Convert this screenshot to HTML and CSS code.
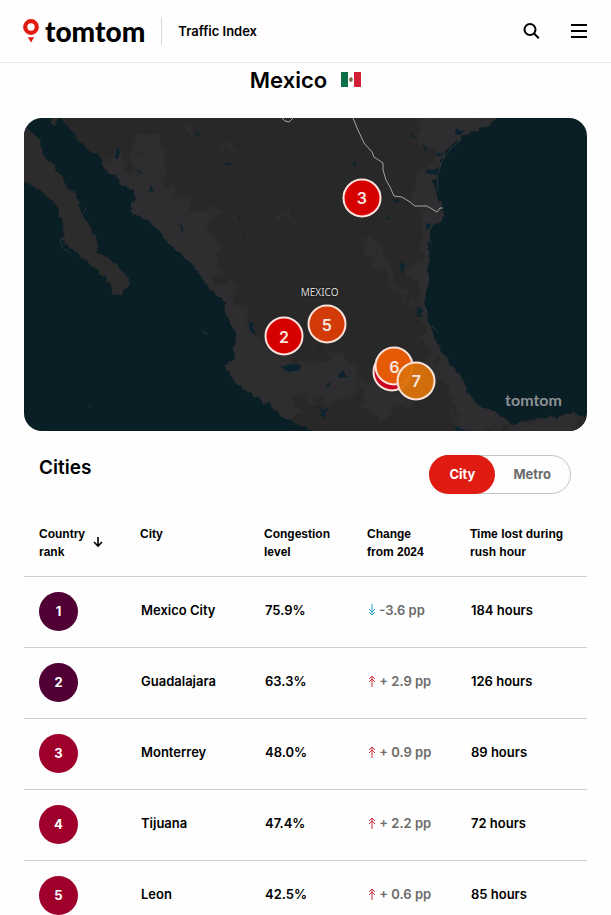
FILE: index.html
```html
<!DOCTYPE html>
<html lang="en">

<head>
  <meta charset="UTF-8">
  <meta name="viewport" content="width=device-width, initial-scale=1.0">
  <title>Mexico traffic | TomTom Traffic Index</title>
  <link rel="stylesheet" href="styles.css">
</head>

<body>
  <header class="header">
    <a class="logo" href="#">
      <svg class="logo-pin" viewBox="0 0 16 24" aria-hidden="true">
        <circle cx="8" cy="8" r="5.8" fill="none" stroke="#df1b12" stroke-width="4.2" />
        <path d="M4.8 18.2h6.4L8 23.6z" fill="#df1b12" />
      </svg>
      <span class="logo-text">tomtom</span>
    </a>
    <a class="product" href="#">Traffic Index</a>
    <button class="icon-button" type="button" aria-label="Search">
      <svg width="18" height="18" viewBox="0 0 18 18" fill="none" stroke="#000" stroke-width="2">
        <circle cx="8" cy="7.500" r="5.500" />
        <path d="M12 11.500l4.800 4.800" />
      </svg>
    </button>
    <button class="icon-button" type="button" aria-label="Menu">
      <svg width="18" height="18" viewBox="0 0 18 18" fill="none" stroke="#000" stroke-width="2">
        <path d="M1 3h16M1 9h16M1 15h16" />
      </svg>
    </button>
  </header>

  <main class="page">
    <div class="title">
      <h1>Mexico</h1>
      <svg class="flag" viewBox="0 0 20 15" role="img" aria-label="Flag of Mexico">
        <path d="M0 0h7v15H0z" fill="#0b7048" />
        <path d="M7 0h6v15H7z" fill="#fff" />
        <path d="M13 0h7v15h-7z" fill="#d31f34" />
        <path d="M8.2 6.500l2-1.500 1.600 1.500-.4 2.700-1.900.8-1.300-1.500z" fill="#7b6a41" />
      </svg>
    </div>

    <section class="map" aria-label="Map of Mexico">
      <svg class="map-canvas" viewBox="0 0 563 313" preserveAspectRatio="xMidYMid slice" aria-hidden="true">
        <defs>
          <filter id="rough" x="-5%" y="-5%" width="110%" height="110%" color-interpolation-filters="sRGB">
            <feTurbulence type="fractalNoise" baseFrequency="0.16" numOctaves="3" seed="4" />
            <feDisplacementMap in="SourceGraphic" scale="6" xChannelSelector="R" yChannelSelector="G" />
          </filter>
          <filter id="patchy" x="-10%" y="-10%" width="120%" height="120%" color-interpolation-filters="sRGB">
            <feTurbulence type="fractalNoise" baseFrequency="0.06" numOctaves="4" seed="9" />
            <feDisplacementMap in="SourceGraphic" scale="34" xChannelSelector="R" yChannelSelector="G" />
            <feGaussianBlur stdDeviation="1" />
          </filter>
          <path id="mainland" d="M36 -6V0L46 12 56 25 66 33 76 37 78 47 84 55 94 60 98 67 108 72 113 80 107 89 109 97 123 102 133 109 139 117 144 125 156 135 166 144 178 160 186 172 193 177 201 185 203 199 211 212 213 224 208 232 212 239 201 247 211 264 228 277 244 285 258 299 274 307 289 313V322H572V300L563 300 549 294 533 299 509 301 488 307 473 294 456 290 443 275 436 257 418 235 404 205 401 182 404 160 405 132 406 109 418 102 419 89 414 80 409 64 416 42 426 29 439 17 454 12 466 7 471 0V-6z" />
          <clipPath id="land"><use href="#mainland" /></clipPath>
        </defs>
        <rect width="563" height="313" fill="#0a1e26" />
        <g filter="url(#rough)">
          <use href="#mainland" fill="#282828" />
          <path fill="#2d2c2d" d="M-6 9H0L6 12 13 19 17 25 20 39 28 45 38 59 43 70 51 75 54 85 59 99 64 107 71 117 74 125 73 134 84 140 94 147 100 155 105 160 104 169 96 177 89 176 87 167 71 150 58 139 46 130 39 122 38 105 34 89 24 79 13 70 0 65H-6zM26 -4H33L31 9 27 7z" />
          <g clip-path="url(#land)">
            <g fill="#2e2e30" filter="url(#patchy)">
              <path d="M75 30L98 42 111 60 116 14 140 18 142 60 150 76 190 90 184 120 196 160 213 182 228 215 270 240 318 232 340 262 310 286 270 282 268 313 190 300 150 180 90 90z" />
              <path d="M395 -5H480L470 20 430 35 424 115 412 118 412 170 422 220 460 280 500 310 440 315 420 270 398 215 388 160 398 110 390 70 408 40 392 20z" />
              <path d="M338 110L356 130 378 165 386 195 372 178 352 150zM360 98L380 108 372 114zM158 4L170 2 174 28 164 22zM201 22L210 30 204 36zM256 92L270 100 260 102z" />
              <path d="M480 306L550 290 570 320H480zM330 268L358 262 400 290 350 300z" />
            </g>
          </g>
        </g>
        <g fill="#0a232e">
          <path d="M93 29l3 5-2 7-3 0zM112 52l8 4-5-1zM127 67l3 6-5 1zM156 104l3 6 0 7-2-6zM172 13l4 3-3 2zM200 45l9 0-4 3zM328 45l4-2 0 5zM369 81l8 1-5 3zM362 99l4 0-2 3zM377 143l4 4-3 9-2-7z" />
          <path d="M257 249l10-3 10 1-1 5-12 2zM314 258l5-6 3 6 4 1-12 1zM303 267l4-4-2 6-3 1zM292 287l7 5 7-3-5 6 1 7-3-4-3-1 2-3zM225 204l5 0-2 5 4 7-4-1-3-5z" />
          <path d="M386 15l6 4-3 1zM398 25l4 5-1 3zM432 10l4 3 5 0-5 4-5-1zM411 35l9 0-5 4zM404 51l5 1 5-3-3 5 2 3-6-1-6-1zM402 105l5 1-1 4-4 2zM393 189l7 4-5 3 6 3-8-1zM429 307l9 4 6 2h-11z" />
        </g>
        <g fill="none" stroke="#575a5b" stroke-width="1" opacity=".4">
          <path d="M414 74q-3-20 7-36 8-11 16-16M36 120l2 9 8 6M59 95l4-6M408 208l6 6M178 213l6 3M65 288l3 1" />
        </g>
        <path d="M214 97l3 5M219 117l3 3" fill="none" stroke="#171a1c" />
        <g fill="none" stroke="#a6a6a6" stroke-width="1">
          <path d="M329 0L334 12 340 25 348 34 350 39 359 45 359 52 362 62 366 69 370 78 378 79 386 84 391 88 403 88 413 94 416 90 419 90" />
          <path d="M258 0L261 3 265 4 269 0" />
        </g>
      </svg>
      <span class="map-label">MEXICO</span>
      <span class="map-brand">tomtom</span>
      <button class="marker marker-1" type="button" aria-label="1"></button>
      <button class="marker marker-2" type="button">2</button>
      <button class="marker marker-3" type="button">3</button>
      <button class="marker marker-5" type="button">5</button>
      <button class="marker marker-6" type="button">6</button>
      <button class="marker marker-7" type="button">7</button>
    </section>

    <section>
      <div class="cities-bar">
        <h2>Cities</h2>
        <div class="toggle" role="radiogroup" aria-label="Area">
          <input type="radio" name="area" id="area-city" checked>
          <label for="area-city">City</label>
          <input type="radio" name="area" id="area-metro">
          <label for="area-metro">Metro</label>
        </div>
      </div>

      <table class="cities">
        <colgroup>
          <col class="col-rank">
          <col class="col-city">
          <col class="col-level">
          <col class="col-change">
          <col class="col-time">
        </colgroup>
        <thead>
          <tr>
            <th scope="col">
              <button class="sort" type="button">
                <span>Country<br>rank</span>
                <svg width="10" height="12" viewBox="0 0 10 12" fill="none" stroke="#000" stroke-width="1.6" aria-hidden="true">
                  <path d="M5 0v9M1 5l4 4 4-4" />
                </svg>
              </button>
            </th>
            <th scope="col">City</th>
            <th scope="col">Congestion<br>level</th>
            <th scope="col">Change<br>from 2024</th>
            <th scope="col">Time lost during<br>rush hour</th>
          </tr>
        </thead>
        <tbody>
          <tr>
            <td><span class="rank rank-high">1</span></td>
            <td>Mexico City</td>
            <td>75.9%</td>
            <td class="change">
              <svg class="arrow arrow-down" viewBox="0 0 8 12"><path d="M4 0v11M1 5l3 3 3-3M1 8l3 3 3-3" /></svg>
              -3.6 pp
            </td>
            <td>184 hours</td>
          </tr>
          <tr>
            <td><span class="rank rank-high">2</span></td>
            <td>Guadalajara</td>
            <td>63.3%</td>
            <td class="change">
              <svg class="arrow" viewBox="0 0 8 12"><path d="M4 12V1M1 4l3-3 3 3M1 7l3-3 3 3" /></svg>
              + 2.9 pp
            </td>
            <td>126 hours</td>
          </tr>
          <tr>
            <td><span class="rank">3</span></td>
            <td>Monterrey</td>
            <td>48.0%</td>
            <td class="change">
              <svg class="arrow" viewBox="0 0 8 12"><path d="M4 12V1M1 4l3-3 3 3M1 7l3-3 3 3" /></svg>
              + 0.9 pp
            </td>
            <td>89 hours</td>
          </tr>
          <tr>
            <td><span class="rank">4</span></td>
            <td>Tijuana</td>
            <td>47.4%</td>
            <td class="change">
              <svg class="arrow" viewBox="0 0 8 12"><path d="M4 12V1M1 4l3-3 3 3M1 7l3-3 3 3" /></svg>
              + 2.2 pp
            </td>
            <td>72 hours</td>
          </tr>
          <tr>
            <td><span class="rank">5</span></td>
            <td>Leon</td>
            <td>42.5%</td>
            <td class="change">
              <svg class="arrow" viewBox="0 0 8 12"><path d="M4 12V1M1 4l3-3 3 3M1 7l3-3 3 3" /></svg>
              + 0.6 pp
            </td>
            <td>85 hours</td>
          </tr>
        </tbody>
      </table>
    </section>
  </main>
</body>

</html>
```

FILE: styles.css
```css
* {
  box-sizing: border-box;
}

:root {
  --red: #df1b12;
  --grey: #6b6b6b;
  --line: #cfcfcf;
  --gutter: 24px;
}

body {
  margin: 0;
  background-color: #fefefe;
  color: #000;
  font-family: Inter, "Open Sans", sans-serif;
  font-size: 13px;
  font-weight: 600;
}

h1,
h2 {
  margin: 0;
  font-weight: 600;
}

a {
  color: inherit;
  text-decoration: none;
}

button {
  border: 0;
  padding: 0;
  background: none;
  color: inherit;
  font: inherit;
  cursor: pointer;
}

/* Header */
.header {
  display: flex;
  align-items: center;
  gap: 16px;
  height: 63px;
  padding: 0 23px;
  border-bottom: 1px solid #e6e6e6;
}

.logo {
  display: flex;
  align-items: center;
  gap: 6px;
}

.logo-pin {
  width: 16px;
  height: 24px;
}

.logo-text {
  font-family: Lato, sans-serif;
  font-size: 28px;
  font-weight: 900;
  line-height: 28px;
}

.product {
  display: flex;
  align-items: center;
  height: 28px;
  margin-right: auto;
  padding-left: 16px;
  border-left: 1px solid #d8d8d8;
}

.icon-button {
  display: flex;
  margin-left: 14px;
}

/* Title */
.page {
  padding: 0 var(--gutter);
}

.title {
  display: flex;
  justify-content: center;
  align-items: center;
  gap: 14px;
  height: 55px;
  padding-bottom: 22px;
}

.title h1 {
  font-size: 22px;
  line-height: 32px;
}

.flag {
  width: 20px;
  height: 15px;
}

/* Map */
.map {
  position: relative;
  aspect-ratio: 563 / 313;
  border-radius: 18px;
  overflow: hidden;
}

.map-canvas {
  display: block;
  width: 100%;
  height: 100%;
}

.map-label,
.map-brand,
.marker {
  position: absolute;
  transform: translate(-50%, -50%);
}

.map-label {
  left: 52.5%;
  top: 55.6%;
  color: #dcdcdc;
  font: 400 10px/12px "Noto Sans", sans-serif;
  text-shadow: 0 0 2px #000;
}

.map-brand {
  left: 90.5%;
  top: 90%;
  color: #8b9092;
  font: 700 16px/20px Lato, sans-serif;
}

.marker {
  width: 39px;
  height: 39px;
  border: 2px solid #fbe3dc;
  border-radius: 50%;
  background-color: #d60000;
  color: #f8e6e0;
  font-size: 16px;
}

.marker-1 {
  left: 65.4%;
  top: 81%;
  background-color: #c8001e;
}

.marker-2 {
  left: 46.2%;
  top: 69.8%;
}

.marker-3 {
  left: 60%;
  top: 25.4%;
}

.marker-5 {
  left: 53.8%;
  top: 65.9%;
  background-color: #d23a08;
}

.marker-6 {
  left: 65.8%;
  top: 79.3%;
  background-color: #e45a06;
}

.marker-7 {
  left: 69.7%;
  top: 84%;
  background-color: rgba(218, 113, 8, 0.95);
}

/* Cities */
.cities-bar {
  display: flex;
  justify-content: space-between;
  align-items: flex-start;
  padding: 24px 16px 22px 15px;
}

.cities-bar h2 {
  font-size: 19px;
  line-height: 26px;
}

.toggle {
  display: flex;
  height: 39px;
  border: 1px solid #c4c4c4;
  border-radius: 20px;
  font-weight: 700;
}

.toggle input {
  position: absolute;
  opacity: 0;
}

.toggle label {
  display: flex;
  align-items: center;
  margin: -1px;
  padding: 0 20px 2px;
  border-radius: 20px;
  color: var(--grey);
  cursor: pointer;
}

.toggle input:checked + label {
  background-color: var(--red);
  color: #fff;
}

.cities {
  width: 100%;
  table-layout: fixed;
  border-collapse: collapse;
  white-space: nowrap;
}

.col-rank {
  width: 101px;
}

.col-city {
  width: 124px;
}

.col-level,
.col-change {
  width: 103px;
}

.col-time {
  width: 132px;
}

.cities tr {
  border-bottom: 1px solid var(--line);
}

.cities th {
  height: 60px;
  padding: 9px 0 0 15px;
  font: bold 12px/18px "Liberation Sans", Arial, sans-serif;
  text-align: left;
  vertical-align: top;
}

.cities td {
  height: 71px;
  padding: 0 0 3px 16px;
}

.cities td:first-child {
  padding: 0 0 0 15px;
}

.sort {
  display: flex;
  align-items: center;
  gap: 8px;
  text-align: left;
}

.rank {
  display: flex;
  justify-content: center;
  align-items: center;
  width: 39px;
  height: 39px;
  padding-bottom: 2px;
  border-radius: 50%;
  background-color: #9e002b;
  color: #fff;
  font-weight: 700;
}

.rank-high {
  background-color: #500035;
}

.cities .change {
  color: var(--grey);
}

.arrow {
  width: 8px;
  height: 12px;
  vertical-align: -1px;
  fill: none;
  stroke: #c5303c;
}

.arrow-down {
  stroke: #2ba6cb;
}
```
